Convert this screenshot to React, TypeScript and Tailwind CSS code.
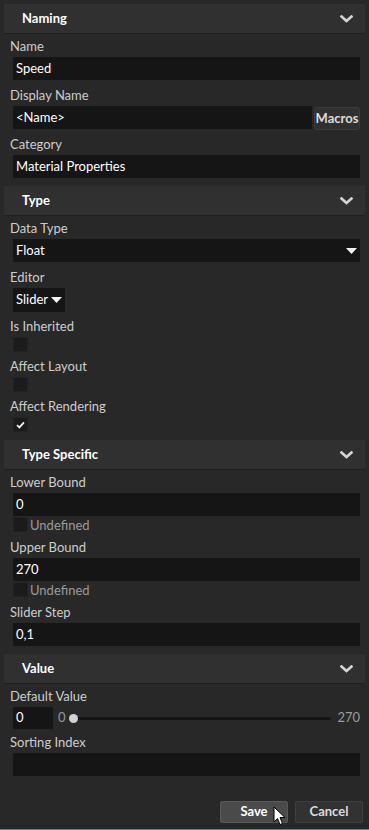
import { ReactNode } from "react";

const Chevron = () => (
  <svg width="13" height="8" viewBox="0 0 13 8" className="mr-[12px]">
    <path d="M1.5 1.5 L6.5 6 L11.5 1.5" stroke="#d4d4d4" strokeWidth="2.6" fill="none" strokeLinecap="square" />
  </svg>
);

const Triangle = () => (
  <svg width="11" height="6" viewBox="0 0 11 6">
    <path d="M0 0 H11 L5.5 6 Z" fill="#f2f2f2" />
  </svg>
);

const Header = ({ title, first }: { title: string; first?: boolean }) => (
  <div className={`mx-[4px] h-[30px] bg-[#303030] border-b border-[#1e1e1e] flex items-center justify-between ${first ? "mt-[4px]" : "mt-[8px]"}`}>
    <span className="pl-[18px] text-[13px] font-bold text-white">{title}</span>
    <Chevron />
  </div>
);

const Label = ({ text, mt }: { text: string; mt: string }) => (
  <div className={`${mt} pl-[10px] h-[16px] leading-[16px] text-[13px] text-[#cdcdcd]`}>{text}</div>
);

const Input = ({ value, children }: { value?: string; children?: ReactNode }) => (
  <div className="mt-[3px] ml-[13px] mr-[9px] h-[23px] bg-[#151515] flex items-center justify-between px-[3px] text-[13px] text-white">
    <span>{value}</span>
    {children}
  </div>
);

const Check = ({ checked }: { checked?: boolean }) => (
  <div className="w-[15px] h-[15px] bg-[#1b1b1b] border border-[#222] flex items-center justify-center">
    {checked && (
      <svg width="9" height="8" viewBox="0 0 9 8">
        <path d="M1 4.2 L3.4 6.4 L8 1.4" stroke="#f0f0f0" strokeWidth="1.8" fill="none" />
      </svg>
    )}
  </div>
);

const Undefined = () => (
  <div className="mt-[1px] ml-[13px] flex items-center h-[15px]">
    <Check />
    <span className="ml-[2px] text-[13px] text-[#9a9a9a] leading-[15px] translate-y-[1px]">Undefined</span>
  </div>
);

export default function App() {
  return (
    <div className="relative w-[369px] h-[830px] bg-[#282828] flex flex-col overflow-hidden" style={{ fontFamily: 'Lato, "Open Sans", sans-serif' }}>
      <Header title="Naming" first />
      <Label text="Name" mt="mt-[4px]" />
      <Input value="Speed" />
      <Label text="Display Name" mt="mt-[7px]" />
      <div className="mt-[3px] ml-[13px] mr-[9px] flex gap-[2px]">
        <div className="flex-1 h-[23px] bg-[#151515] flex items-center px-[3px] text-[13px] text-white">&lt;Name&gt;</div>
        <div className="w-[46px] h-[23px] mt-[1px] bg-[#303030] border border-[#3c3c3c] rounded-[3px] flex items-center justify-center text-[13px] font-bold text-[#dcdcdc]">Macros</div>
      </div>
      <Label text="Category" mt="mt-[6px]" />
      <Input value="Material Properties" />

      <Header title="Type" />
      <Label text="Data Type" mt="mt-[4px]" />
      <Input value="Float">
        <Triangle />
      </Input>
      <Label text="Editor" mt="mt-[7px]" />
      <div className="mt-[3px] ml-[13px] w-[52px] h-[24px] bg-[#151515] flex items-center justify-between pl-[3px] pr-[3px] text-[13px] text-white">
        <span>Slider</span>
        <Triangle />
      </div>
      <Label text="Is Inherited" mt="mt-[6px]" />
      <div className="mt-[3px] ml-[13px]"><Check /></div>
      <Label text="Affect Layout" mt="mt-[6px]" />
      <div className="mt-[3px] ml-[13px]"><Check /></div>
      <Label text="Affect Rendering" mt="mt-[6px]" />
      <div className="mt-[3px] ml-[13px]"><Check checked /></div>

      <Header title="Type Specific" />
      <Label text="Lower Bound" mt="mt-[4px]" />
      <Input value="0" />
      <Undefined />
      <Label text="Upper Bound" mt="mt-[7px]" />
      <Input value="270" />
      <Undefined />
      <Label text="Slider Step" mt="mt-[7px]" />
      <Input value="0,1" />

      <Header title="Value" />
      <Label text="Default Value" mt="mt-[4px]" />
      <div className="mt-[3px] ml-[13px] mr-[9px] flex items-center h-[22px]">
        <div className="w-[40px] h-[22px] bg-[#151515] flex items-center px-[3px] text-[13px] text-white">0</div>
        <span className="ml-[5px] text-[13px] text-[#9a9a9a]">0</span>
        <div className="relative flex-1 ml-[6px] mr-[6px] h-[3px] bg-[#151515] rounded-full">
          <div className="absolute left-[-3px] top-[-3px] w-[9px] h-[9px] rounded-full bg-[#d2d2d2]" />
        </div>
        <span className="text-[13px] text-[#9a9a9a]">270</span>
      </div>
      <Label text="Sorting Index" mt="mt-[5px]" />
      <Input />

      <div className="mt-auto mb-[6px] flex justify-end gap-[7px] pr-[6px]">
        <div className="w-[68px] h-[22px] bg-[#4a4a4a] border border-[#5a5a5a] rounded-[2px] flex items-center justify-center text-[13px] font-bold text-white">Save</div>
        <div className="w-[68px] h-[22px] bg-[#323232] border border-[#404040] rounded-[2px] flex items-center justify-center text-[13px] font-bold text-[#dcdcdc]">Cancel</div>
      </div>
      <div className="h-[1px] bg-[#3f86c8]" />

      <svg className="absolute left-[273px] top-[806px]" width="13" height="21" viewBox="0 0 13 21">
        <path d="M1 1 V16 L4.5 12.5 L7 18.5 L9.5 17.5 L7 11.5 L12 11.5 Z" fill="#fff" stroke="#000" strokeWidth="1" strokeLinejoin="round" />
      </svg>
    </div>
  );
}
